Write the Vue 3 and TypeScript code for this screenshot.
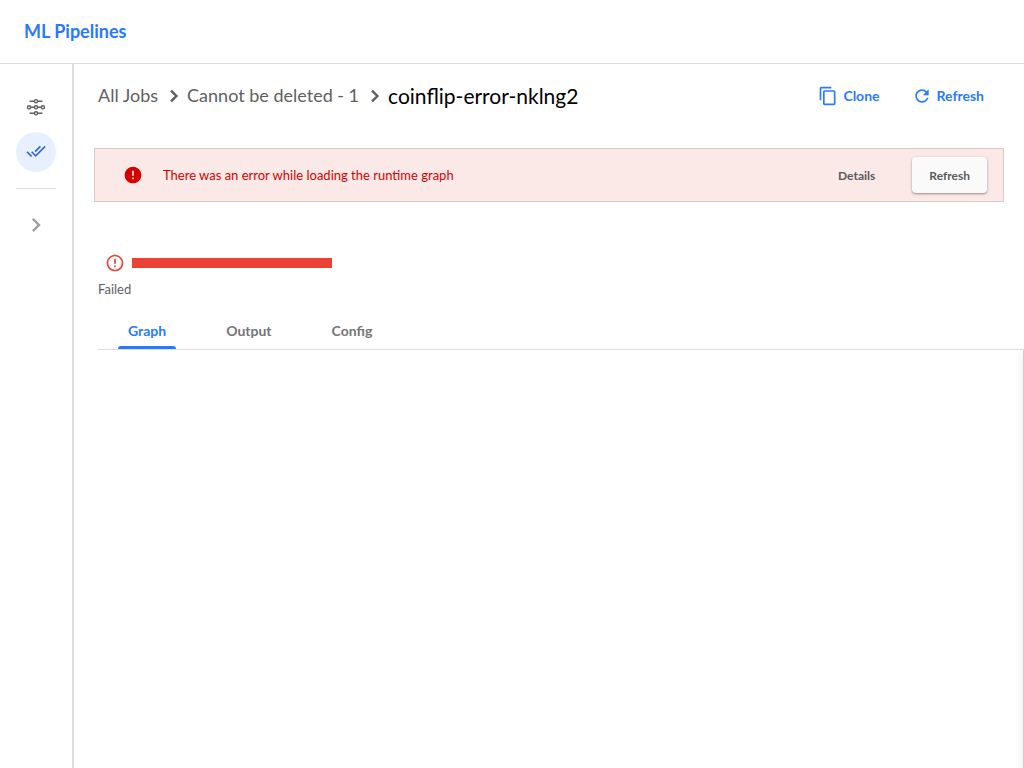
<script setup lang="ts">
import { ref } from 'vue'

const tabs: string[] = ['Graph', 'Output', 'Config']
const selected = ref<string>('Graph')
const crumbs: string[] = ['All Jobs', 'Cannot be deleted - 1']
</script>

<template>
  <div class="app">
    <header class="top">
      <a class="brand" href="#">ML Pipelines</a>
    </header>
    <div class="body">
      <nav class="side" aria-label="Main">
        <a class="nav" href="#" aria-label="Pipelines">
          <svg width="20" height="20" viewBox="0 0 20 20" fill="none" stroke="#5f5f5f" stroke-width="1.4">
            <path d="M3.6 3.2H8.3M11.7 3.2h4.7M4.7 9.3h3.6M11.7 9.3h3.6M3.6 15.3H8.3M11.7 15.3h4.7" />
            <circle cx="10" cy="3.2" r="1.6" />
            <circle cx="3.1" cy="9.3" r="1.6" />
            <circle cx="10" cy="9.3" r="1.6" />
            <circle cx="16.9" cy="9.3" r="1.6" />
            <circle cx="10" cy="15.3" r="1.6" />
          </svg>
        </a>
        <a class="nav active" href="#" aria-label="Jobs">
          <svg width="20" height="20" viewBox="0 1 24 24" fill="#3367d6">
            <path d="M18 7l-1.41-1.41-6.34 6.34 1.41 1.41L18 7zm4.24-1.41L11.66 16.17 7.48 12l-1.41 1.41L11.66 19l12-12-1.42-1.41zM.41 13.41L6 19l1.41-1.41L1.83 12 .41 13.41z" />
          </svg>
        </a>
        <hr class="rule" />
        <button class="nav expand" type="button" aria-label="Expand">
          <svg width="28" height="28" viewBox="0 0 24 24" fill="#9e9e9e">
            <path d="M10 6L8.59 7.41 13.17 12l-4.58 4.59L10 18l6-6z" />
          </svg>
        </button>
      </nav>
      <main class="main">
        <div class="toolbar">
          <nav class="crumbs" aria-label="Breadcrumb">
            <template v-for="crumb in crumbs" :key="crumb">
              <a class="crumb" href="#">{{ crumb }}</a>
              <svg class="sep" width="24" height="24" viewBox="0 0 24 24" fill="none" stroke="#5f5f5f" stroke-width="2.4">
                <path d="M9 6.6l5.4 5.4L9 17.4" />
              </svg>
            </template>
            <h1 class="title">coinflip-error-nklng2</h1>
          </nav>
          <div class="actions">
            <button class="action" type="button">
              <svg width="20" height="20" viewBox="0 0 24 24" fill="#2979ff">
                <path d="M16 1H4c-1.1 0-2 .9-2 2v14h2V3h12V1zm3 4H8c-1.1 0-2 .9-2 2v14c0 1.1.9 2 2 2h11c1.1 0 2-.9 2-2V7c0-1.1-.9-2-2-2zm0 16H8V7h11v14z" />
              </svg>
              <span>Clone</span>
            </button>
            <button class="action" type="button">
              <svg width="20" height="20" viewBox="0 0 24 24" fill="#2979ff">
                <path d="M17.65 6.35C16.2 4.9 14.21 4 12 4c-4.42 0-7.99 3.58-7.99 8s3.57 8 7.99 8c3.73 0 6.84-2.55 7.73-6h-2.08c-.82 2.33-3.04 4-5.65 4-3.31 0-6-2.69-6-6s2.69-6 6-6c1.66 0 3.14.69 4.22 1.78L13 11h7V4l-2.35 2.35z" />
              </svg>
              <span>Refresh</span>
            </button>
          </div>
        </div>
        <div class="banner" role="alert">
          <svg width="20" height="20" viewBox="0 0 24 24" fill="#d50000">
            <path d="M12 2C6.48 2 2 6.48 2 12s4.48 10 10 10 10-4.48 10-10S17.52 2 12 2zm1 15h-2v-2h2v2zm0-4h-2V7h2v6z" />
          </svg>
          <span class="message">There was an error while loading the runtime graph</span>
          <button class="details" type="button">Details</button>
          <button class="retry" type="button">Refresh</button>
        </div>
        <section class="status">
          <div class="progress">
            <svg width="20" height="20" viewBox="0 0 24 24" fill="#ea4335">
              <path d="M11 15h2v2h-2zm0-8h2v6h-2zm.99-5C6.47 2 2 6.48 2 12s4.47 10 9.99 10C17.52 22 22 17.52 22 12S17.52 2 11.99 2zM12 20c-4.42 0-8-3.58-8-8s3.58-8 8-8 8 3.58 8 8-3.58 8-8 8z" />
            </svg>
            <div class="bar"></div>
          </div>
          <div class="state">Failed</div>
        </section>
        <div class="tabs" role="tablist">
          <button
            v-for="tab in tabs"
            :key="tab"
            class="tab"
            :class="{ on: tab === selected }"
            type="button"
            role="tab"
            :aria-selected="tab === selected"
            @click="selected = tab"
          >{{ tab }}</button>
        </div>
        <div class="canvas">
          <div class="panel"></div>
        </div>
      </main>
    </div>
  </div>
</template>

<style>
body {
  margin: 0;
  background: #fff;
}
</style>

<style scoped>
.app {
  display: flex;
  flex-direction: column;
  min-height: 100vh;
  overflow: hidden;
  font-family: Lato, "Open Sans", sans-serif;
  font-size: 13px;
  color: #5f5f5f;
}
.app * {
  box-sizing: border-box;
}
svg {
  display: block;
  flex: none;
}
button {
  margin: 0;
  padding: 0;
  border: 0;
  background: none;
  font: inherit;
  color: inherit;
  cursor: pointer;
}
a {
  color: inherit;
  text-decoration: none;
}
.top {
  display: flex;
  align-items: center;
  height: 64px;
  padding: 0 24px 2px;
  border-bottom: 1px solid #ddd;
}
.brand {
  font-size: 18px;
  font-weight: 700;
  line-height: 24px;
  color: #2979ff;
}
.body {
  display: flex;
  flex: 1;
}
.side {
  display: flex;
  flex-direction: column;
  align-items: center;
  flex: none;
  gap: 4px;
  width: 74px;
  padding: 24px 16px;
  border-right: 2px solid #ddd;
}
.nav {
  display: flex;
  align-items: center;
  justify-content: center;
  width: 40px;
  height: 40px;
  border-radius: 50%;
}
.active {
  background: #e8f0fe;
}
.rule {
  width: 40px;
  height: 1px;
  margin: 12px 0;
  border: 0;
  background: #ddd;
}
.main {
  display: flex;
  flex-direction: column;
  flex: 1;
  min-width: 0;
}
.toolbar {
  display: flex;
  align-items: center;
  justify-content: space-between;
  height: 64px;
  padding: 0 40px 0 24px;
}
.crumbs {
  display: flex;
  align-items: center;
  font-size: 18px;
}
.crumb,
.title,
.action span {
  padding-bottom: 2px;
}
.crumb {
  color: #5f5f5f;
}
.sep {
  margin: 0 1px 0 4px;
}
.title {
  margin: 0;
  font-size: 21px;
  font-weight: 400;
  color: #000;
}
.actions {
  display: flex;
  gap: 32px;
}
.action {
  display: flex;
  align-items: center;
  gap: 5px;
  font-size: 14px;
  font-weight: 700;
  color: #2979ff;
}
.banner {
  display: flex;
  align-items: center;
  height: 54px;
  margin: 20px 20px 0;
  padding: 0 16px 0 28px;
  border: 1px solid #dfc9c8;
  background: #fbe9e7;
}
.message {
  flex: 1;
  margin-left: 20px;
  font-size: 13px;
  color: #d50000;
}
.details,
.retry {
  height: 36px;
  padding: 0 17px;
  border-radius: 4px;
  font-size: 12px;
  font-weight: 700;
  color: #5a5a5a;
}
.retry {
  margin-left: 20px;
  background: #fafafa;
  box-shadow: 0 1px 3px rgba(0, 0, 0, 0.3), 0 1px 1px rgba(0, 0, 0, 0.15);
}
.status {
  margin: 51px 24px 0;
}
.progress {
  display: flex;
  align-items: center;
  gap: 7px;
  padding-left: 7px;
}
.bar {
  width: 200px;
  height: 10px;
  background: #ea4335;
}
.state {
  margin-top: 8px;
  line-height: 16px;
}
.tabs {
  display: flex;
  gap: 40px;
  height: 38px;
  margin: 15px 0 0 24px;
  padding-left: 20px;
  border-bottom: 1px solid #ddd;
}
.tab {
  position: relative;
  display: flex;
  flex-direction: column;
  align-items: center;
  padding: 10px 10px 0;
  font-size: 14px;
  font-weight: 700;
  line-height: 18px;
  color: #757575;
}
.on {
  color: #2979ff;
}
.on::after {
  content: "";
  position: absolute;
  right: 0;
  bottom: 0;
  left: 0;
  height: 3px;
  border-radius: 3px 3px 0 0;
  background: #2979ff;
}
.canvas {
  display: flex;
  justify-content: flex-end;
  flex: 1;
}
.panel {
  width: 1px;
  background: #ccc;
  box-shadow: 0 4px 6px rgba(0, 0, 0, 0.3);
}
</style>
